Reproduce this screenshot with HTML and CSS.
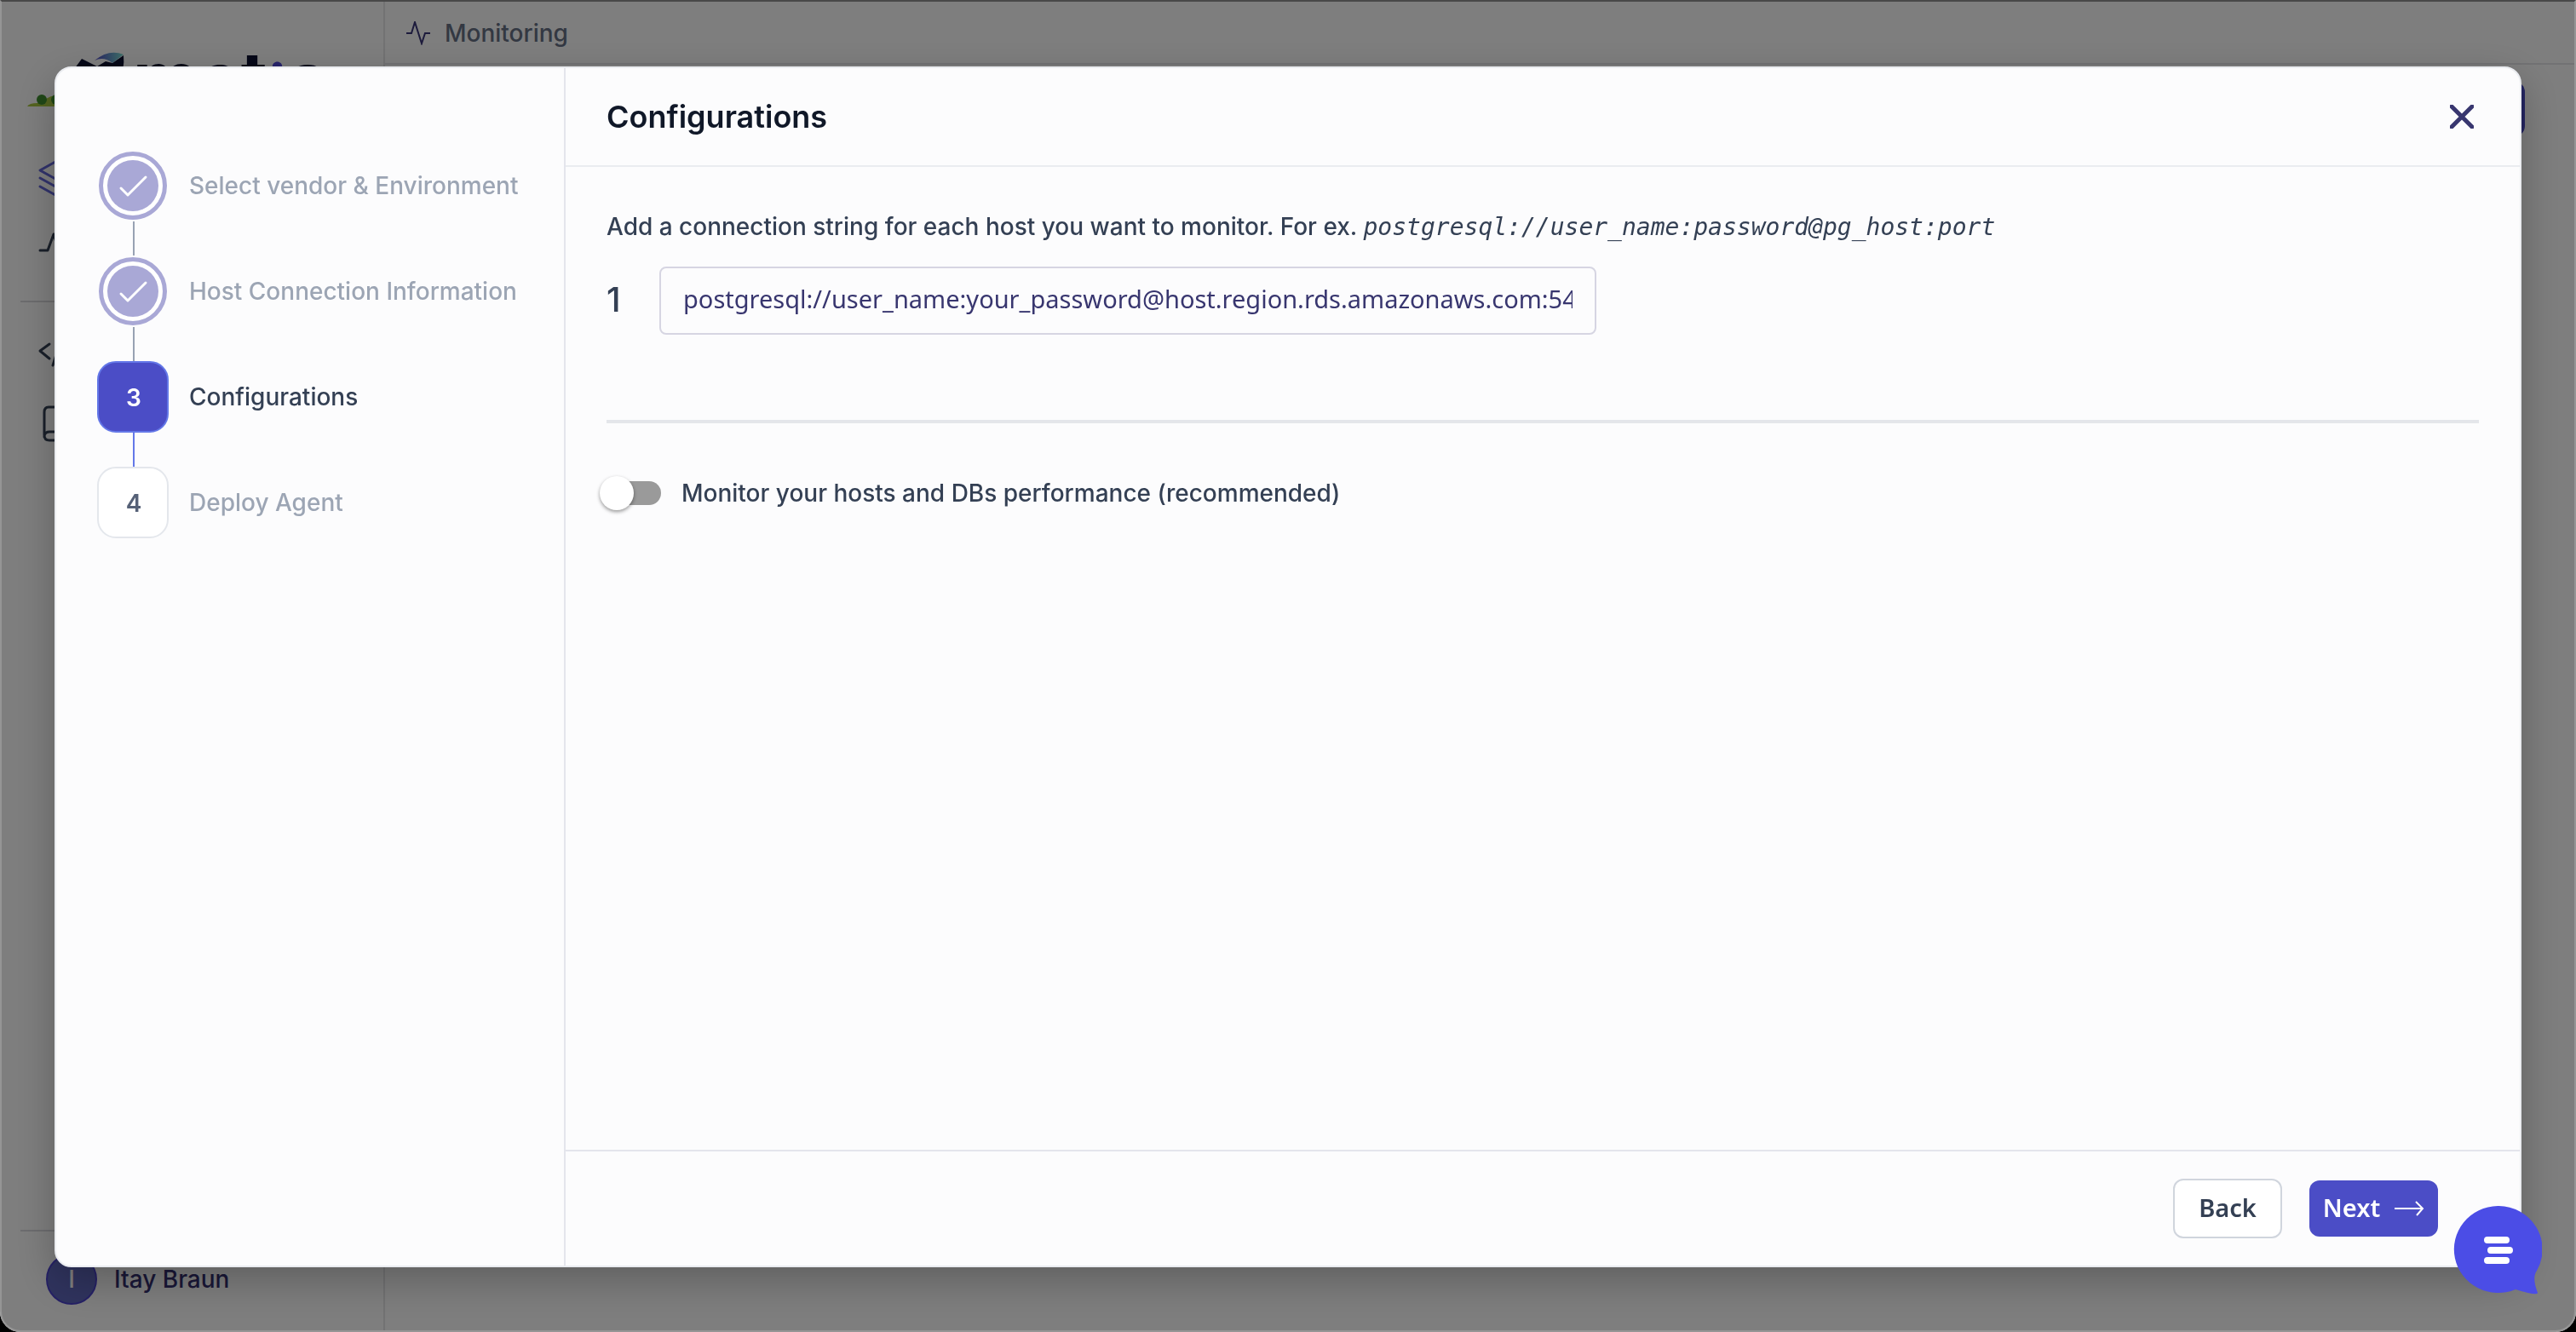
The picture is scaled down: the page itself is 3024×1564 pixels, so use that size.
FILE: index.html
```html
<!DOCTYPE html>
<html lang="en">
<head>
<meta charset="utf-8">
<title>Monitoring</title>
<link rel="stylesheet" href="styles.css">
</head>
<body>
<div class="app">
  <aside class="sidebar">
    <div class="brand">
      <svg class="brand-mark" viewBox="0 0 60 44" aria-hidden="true">
        <defs><linearGradient id="leaf" x1="0" y1="0" x2="1" y2="0"><stop offset="0" stop-color="#5048c8"/><stop offset="1" stop-color="#7ce0d0"/></linearGradient></defs>
        <path d="M8 7 L26 16 L36 10 L44 12 L57 3 Q59 18 50 40 L-6 26Z" fill="#0c1030"/>
        <path d="M23 9 Q40 -5 57 2 L44 12 Q34 4 23 9Z" fill="url(#leaf)"/>
      </svg>
      <span class="brand-name">met<span class="brand-i">i</span>s</span>
    </div>
    <svg class="trees" viewBox="0 0 60 14" aria-hidden="true">
      <path d="M0 14 Q2 10 12 10 L28 2 Q44 0 60 14Z" fill="#a8c840"/>
      <ellipse cx="17" cy="6" rx="6" ry="6" fill="#409030"/><ellipse cx="34" cy="6" rx="6" ry="6" fill="#409030"/>
    </svg>
    <nav class="side-nav">
      <a href="#" aria-label="Projects"><svg class="nav-icon layers" viewBox="0 0 56 56"><path d="M28 0 L1 15 L28 30 L55 15Z M1 24 L28 39 L55 24 M1 34 L28 49 L55 34"/></svg></a>
      <a href="#" aria-label="Monitoring"><svg class="nav-icon" viewBox="0 0 56 56"><path d="M1 25 H10 L17 6 L28 42 L36 25 H50"/></svg></a>
      <hr>
      <a href="#" aria-label="Queries"><svg class="nav-icon" viewBox="0 0 56 56"><path d="M12 11 L1 19 L12 28 M25 8 L16 36 M29 11 L40 19 L29 28"/></svg></a>
      <a href="#" aria-label="Documentation"><svg class="nav-icon" viewBox="0 0 56 56"><path d="M42 1 H11 Q6 1 6 7 V34 Q6 40 12 40 H42Z M6 36 Q6 30 12 30 H42"/></svg></a>
    </nav>
    <div class="account"><span class="avatar">I</span><span>Itay Braun</span></div>
  </aside>
  <main class="page">
    <header class="page-bar">
      <svg class="pulse" viewBox="0 0 30 28" aria-hidden="true"><path d="M1 14 H7 L11 1 L19 26 L23 14 H29"/></svg>
      <span>Monitoring</span>
    </header>
    <div class="page-actions"><button class="page-button" type="button" aria-label="Add host"></button></div>
  </main>
</div>

<div class="overlay">
  <section class="dialog" role="dialog" aria-labelledby="dialog-title">
    <ol class="steps">
      <li class="step done"><span class="badge"><svg viewBox="0 0 60 60" aria-hidden="true"><path d="M16 33 L24 41 L45 20"/></svg></span><span>Select vendor &amp; Environment</span></li>
      <li class="step done"><span class="badge"><svg viewBox="0 0 60 60" aria-hidden="true"><path d="M16 33 L24 41 L45 20"/></svg></span><span>Host Connection Information</span></li>
      <li class="step current"><span class="badge">3</span><span>Configurations</span></li>
      <li class="step"><span class="badge">4</span><span>Deploy Agent</span></li>
    </ol>
    <form class="panel">
      <header class="panel-head">
        <h1 id="dialog-title">Configurations</h1>
        <button class="close" type="button" aria-label="Close"><svg viewBox="0 0 28 28" aria-hidden="true"><path d="M2 2 L26 26 M26 2 L2 26"/></svg></button>
      </header>
      <div class="panel-body">
        <p class="hint">Add a connection string for each host you want to monitor. For ex. <em>postgresql://user_name:password@pg_host:port</em></p>
        <div class="host">
          <label for="host-1">1</label>
          <input id="host-1" type="text" value="postgresql://user_name:your_password@host.region.rds.amazonaws.com:5432">
        </div>
        <hr class="divider">
        <label class="switch"><input type="checkbox"><span>Monitor your hosts and DBs performance (recommended)</span></label>
      </div>
      <footer class="panel-foot">
        <button class="btn back" type="button">Back</button>
        <button class="btn next" type="button"><span>Next</span><svg viewBox="0 0 36 18" aria-hidden="true"><path d="M1 9 H34 M26 1 L34 9 L27 17"/></svg></button>
      </footer>
    </form>
  </section>
</div>
<button class="chat" type="button" aria-label="Open chat">
  <svg viewBox="0 0 104 104" aria-hidden="true">
    <path d="M52 0 A52 51 0 0 1 98 76 Q92 84 99 102 Q99 106 73 98 A52 51 0 1 1 52 0Z" fill="#4b4de6"/>
    <path d="M40 40 H62 M44 52 H66 M40 64 H62" stroke="#fff" stroke-width="8" stroke-linecap="round"/>
  </svg>
</button>
</body>
</html>
```
FILE: styles.css
```css
* { box-sizing: border-box; }
html, body { height: 100%; margin: 0; }
body { background: #000; font-family: Inter, "Liberation Sans", sans-serif; font-size: 28px; font-weight: 500; color: #344054; overflow: hidden; }
button { font: inherit; cursor: pointer; }
svg { display: block; fill: none; flex: none; }

/* Page behind the dialog */
.app { display: flex; height: 100%; background: #fdfdfd; border-radius: 0 0 24px 24px; overflow: hidden; }
.sidebar { width: 452px; flex: none; border-right: 2px solid #e4e4e6; padding: 62px 24px 32px; display: flex; flex-direction: column; }
.brand { display: flex; gap: 8px; height: 49px; padding-left: 64px; }
.brand-mark { width: 60px; height: 44px; overflow: visible; }
.brand-name { font-size: 84px; line-height: 60px; font-weight: 700; color: #0c1030; }
.brand-i { margin: 0 3px; font-size: 64px; line-height: 1px; font-weight: 800; color: #5048d8; }
.trees { width: 60px; height: 14px; margin-left: 8px; }
.side-nav { padding-top: 60px; }
.side-nav a { display: block; height: 84px; padding-left: 22px; }
.side-nav hr { margin: 0 0 38px; border: 0; border-top: 2px solid #d8d8dc; }
.nav-icon { width: 56px; height: 56px; stroke: #344054; stroke-width: 3; stroke-linecap: round; stroke-linejoin: round; overflow: visible; }
.layers { stroke: #6366d8; }
.account { margin-top: auto; border-top: 2px solid #dadade; padding: 26px 0 0 30px; display: flex; align-items: center; gap: 20px; color: #342f70; }
.avatar { width: 60px; height: 60px; border-radius: 50%; background: #6068bd; border: 2px solid #4b42cc; color: #fff; display: grid; place-items: center; }
.page { flex: 1; }
.page-bar { height: 76px; padding: 4px 0 0 24px; border-bottom: 2px solid #e4e4e8; display: flex; align-items: center; gap: 16px; color: #667085; }
.pulse { width: 30px; height: 28px; stroke: #3a3678; stroke-width: 2; }
.page-actions { display: flex; justify-content: flex-end; padding: 20px 60px; }
.page-button { width: 240px; height: 64px; border: 0; border-radius: 12px; background: #4b4cc4; }

/* Dialog */
.overlay { position: fixed; inset: 0; padding: 76px 62px 74px; display: flex; background: rgba(0, 0, 0, .5); border: 2px solid #959595; border-top-color: #484848; border-radius: 0 0 24px 24px; }
.dialog { flex: 1; display: flex; background: #fcfcfd; border: 2px solid #eaecf0; border-radius: 20px; box-shadow: 0 16px 48px rgba(0, 0, 0, .25); }
.steps { width: 598px; flex: none; margin: 0; padding: 96px 48px; list-style: none; border-right: 2px solid #e4e5ec; display: flex; flex-direction: column; gap: 40px; }
.step { display: flex; align-items: center; gap: 24px; color: #9ca5b4; position: relative; }
.badge { width: 84px; height: 84px; padding: 2px 0 0 2px; border: 2px solid #e4e7ec; border-radius: 22px; background: #fff; color: #566177; font-weight: 600; display: grid; place-items: center; flex: none; }
.step:not(:last-child)::after { content: ""; position: absolute; left: 42px; top: 100%; width: 2px; height: 40px; background: #98a2b3; }
.done .badge { width: 80px; height: 80px; margin: 2px; border: 5px solid #a9a8d6; border-radius: 50%; padding: 5px; }
.done .badge svg { width: 60px; height: 60px; border-radius: 50%; background: #a9a8d6; stroke: #fff; stroke-width: 3; stroke-linecap: round; stroke-linejoin: round; }
.current { color: #344054; }
.current .badge { background: #4b4dc6; border-color: #6478e8; color: #fff; }
.step.current:not(:last-child)::after { background: #6478e8; }

.panel { flex: 1; min-width: 0; display: flex; flex-direction: column; }
.panel-head { height: 116px; padding: 0 50px 0 48px; display: flex; align-items: center; justify-content: space-between; border-bottom: 2px solid #eaecf0; }
.panel-head h1 { margin: 0; font-size: 36px; line-height: 44px; font-weight: 600; color: #101828; }
.close { padding: 4px; border: 0; background: none; }
.close svg { width: 28px; height: 28px; stroke: #38366f; stroke-width: 5; stroke-linecap: round; }
.panel-body { flex: 1; padding: 48px; }
.hint { margin: 0; line-height: 44px; }
.hint em { font-family: "DejaVu Sans Mono", monospace; font-weight: 400; }
.host { margin-top: 24px; display: flex; align-items: center; }
.host label { width: 62px; flex: none; padding-bottom: 4px; font-size: 40px; }
.host input { width: 1100px; height: 80px; padding: 0 26px 6px; border: 2px solid #d6d5e2; border-radius: 8px; background: transparent; font: 400 29px "Noto Sans", sans-serif; color: #38366f; }
.divider { margin: 100px 0 0; border: 0; border-top: 4px solid #e4e6ea; }
.switch { margin-top: 60px; display: flex; align-items: center; gap: 24px; line-height: 44px; }
.switch input { appearance: none; position: relative; width: 64px; height: 28px; margin: 0; border-radius: 14px; background: #9a9a9a; }
.switch input::before { content: ""; position: absolute; left: -8px; top: -6px; width: 40px; height: 40px; border-radius: 50%; background: #fff; box-shadow: 0 2px 4px rgba(0, 0, 0, .4); }
.panel-foot { height: 136px; padding: 0 96px; border-top: 2px solid #e4e5ec; display: flex; align-items: center; justify-content: flex-end; gap: 32px; }
.btn { padding: 0 0 4px; border-radius: 12px; font-family: "Noto Sans", sans-serif; font-size: 29px; font-weight: 600; display: flex; align-items: center; justify-content: center; }
.back { width: 128px; height: 70px; border: 2px solid #d0d5dd; background: #fff; color: #344054; }
.next { width: 151px; height: 66px; border: 0; gap: 16px; background: #4b4dc6; color: #fff; }
.next svg { width: 36px; height: 18px; margin-top: 4px; stroke: #fff; stroke-width: 2; }

.chat { position: fixed; right: 40px; bottom: 44px; width: 104px; height: 104px; padding: 0; border: 0; background: none; }
.chat svg { width: 104px; height: 104px; }
```
